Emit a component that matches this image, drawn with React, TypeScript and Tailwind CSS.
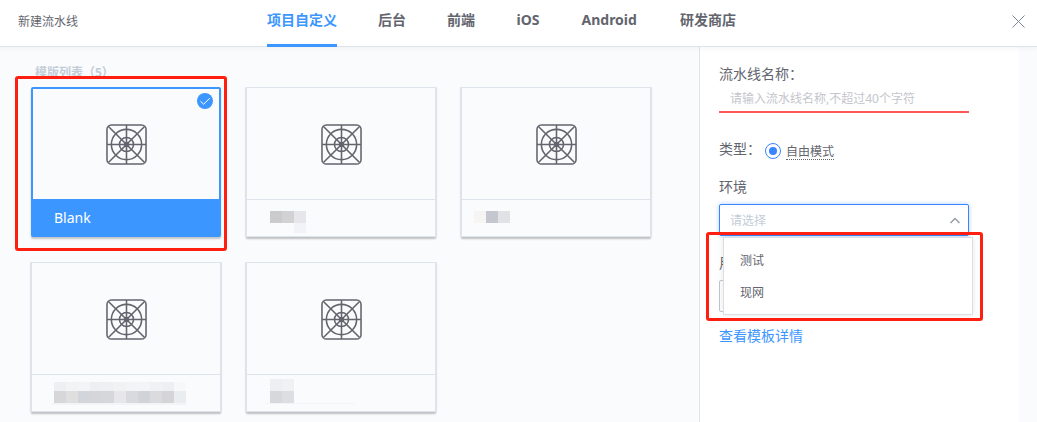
import React from 'react';

const GRID_FONT = "font-['Noto_Sans','Noto_Sans_CJK_SC',sans-serif]";

function TemplateIcon() {
  return (
    <svg width="41" height="41" viewBox="0 0 42 42" fill="none" stroke="#63656e" strokeWidth="1.6">
      <rect x="1" y="1" width="40" height="40" rx="4.5" />
      <circle cx="21" cy="21" r="15.5" />
      <circle cx="21" cy="21" r="7.2" />
      <circle cx="21" cy="21" r="2" fill="#63656e" />
      <path d="M21 1V41M1 21H41M2.5 2.5L39.5 39.5M39.5 2.5L2.5 39.5" />
    </svg>
  );
}

type Block = { x: number; y: number; w: number; h: number; c: string };

const strip = (x: number, y: number, h: number, colors: string[]): Block[] =>
  colors.map((c, i) => ({ x: x + i * 12, y, w: 12, h, c }));

const masks: Block[][] = [
  [...strip(23, 11, 12, ['#cbcbce', '#d2d2d5', '#e7e7eb']), { x: 47, y: 23, w: 12, h: 10, c: '#f2f3f8' }],
  strip(12, 11, 12, ['#f7f5f3', '#c4c7d0', '#e2e2e6']),
  [
    ...strip(22, 7, 9, ['#eeeff2', '#f2f3f5', '#f3f4f5', '#eeeff1', '#eff0f2', '#f1f2f4', '#f3f4f5', '#f3f4f5', '#f0f1f3', '#edeff3', '#f7f8fa']),
    ...strip(22, 16, 12, ['#d7d7d9', '#dfdfe0', '#d2d6db', '#d5d6da', '#d6d7da', '#e7e7e9', '#d9dadf', '#d2d3d8', '#dbdbdf', '#d5d5d7', '#e9edf0']),
    { x: 20, y: 28, w: 135, h: 2, c: '#f3f4f6' },
  ],
  [
    ...strip(23, 4, 12, ['#eeeff2', '#f0f1f2']),
    ...strip(23, 16, 12, ['#d7d8dc', '#dddee2']),
    { x: 18, y: 28, w: 90, h: 1, c: '#f3f4f6' },
  ],
];

function Mask({ blocks }: { blocks: Block[] }) {
  return (
    <svg className="block" width="188" height="36" viewBox="0 0 188 36" shapeRendering="crispEdges">
      {blocks.map((b, i) => (
        <rect key={i} x={b.x} y={b.y} width={b.w} height={b.h} fill={b.c} />
      ))}
    </svg>
  );
}

function TemplateCard({ blocks }: { blocks: Block[] }) {
  return (
    <div className="flex h-[150px] w-[190px] flex-col rounded-[1px] border border-[#dde4eb] bg-[#fafbfd] shadow-[-1px_0_0_#dfe3e8,1px_0_0_#dfe3e8,0_2px_2px_rgba(0,0,0,0.24)]">
      <div className="flex h-[111px] items-center justify-center pt-0.5">
        <TemplateIcon />
      </div>
      <div className="border-t border-[#dde4eb]">
        <Mask blocks={blocks} />
      </div>
    </div>
  );
}

function SelectedCard() {
  return (
    <div className="relative flex h-[150px] w-[190px] flex-col rounded-[2px] border-2 border-[#3c96ff] bg-[#fafbfd] shadow-[0_2px_2px_rgba(0,0,0,0.22)]">
      <div className="flex h-[110px] items-center justify-center">
        <TemplateIcon />
      </div>
      <div className="h-[36px] bg-[#3c96ff] pl-[21px] text-sm leading-[38px] text-white">Blank</div>
      <svg className="absolute top-1 right-1.5" width="16" height="16" viewBox="0 0 16 16" fill="none">
        <circle cx="8" cy="8" r="8" fill="#3c96ff" />
        <path d="M3.5 8.3L6.6 11.2L12.8 5.2" stroke="#fff" strokeWidth="1" />
      </svg>
      <div className="absolute -top-[13px] -left-[18px] h-[175px] w-[212px] rounded-[3px] border-[3px] border-[#ff1f10]" />
    </div>
  );
}

const tabs = [
  { label: '项目自定义', width: 'w-[70px]' },
  { label: '后台', width: 'w-[28px]' },
  { label: '前端', width: 'w-[28.5px]' },
  { label: 'iOS', width: 'w-[24px]' },
  { label: 'Android', width: 'w-[57.5px]' },
  { label: '研发商店', width: 'w-[56px]' },
];

function Header() {
  return (
    <header className="relative z-10 flex h-[47px] shrink-0 border-b border-[#dde4eb] bg-white shadow-[0_2px_5px_rgba(0,0,0,0.04)]">
      <h1 className="w-[267px] pl-[18px] text-xs leading-[43px] font-normal text-[#63656e]">新建流水线</h1>
      <nav className="flex h-[47px] flex-1 gap-[41px] text-sm leading-[40px] font-bold">
        {tabs.map((tab, i) => (
          <span
            key={tab.label}
            className={`${tab.width} whitespace-nowrap ${i === 0 ? 'border-b-[3px] border-[#3c96ff] text-[#3c96ff]' : 'text-[#63656e]'}`}
          >
            {tab.label}
          </span>
        ))}
      </nav>
      <svg className="mt-[15px] mr-3 shrink-0" width="13" height="13" viewBox="0 0 13 13" stroke="#7b8699" strokeWidth="1">
        <path d="M0.5 0.5L12.5 12.5M12.5 0.5L0.5 12.5" />
      </svg>
    </header>
  );
}

function Dropdown() {
  return (
    <>
      <ul className="absolute top-[32px] left-[3px] z-10 flex h-[78px] w-[250px] flex-col border border-[#dcdee5] bg-white pt-[7px] pl-4 text-xs shadow-[0_0_6px_rgba(51,60,72,0.12)]">
        <li className="h-8 leading-8">测试</li>
        <li className="h-8 leading-8">现网</li>
      </ul>
      <div className="absolute top-[27px] -left-[14px] z-20 h-[89px] w-[277px] rounded-[3px] border-[3px] border-[#ff1f10]" />
    </>
  );
}

function SettingsPanel() {
  return (
    <aside className="flex w-[320px] shrink-0 flex-col border-l border-[#dde4eb] bg-white pl-[19px] text-sm text-[#63656e]">
      <div className="mt-[17px] h-5 leading-5">流水线名称：</div>
      <div className="mt-px h-[28px] w-[250px] border-b-2 border-[#ff5656] pl-[11px] text-xs leading-[27px] text-[#c4c6cc]">
        请输入流水线名称,不超过40个字符
      </div>
      <div className="mt-[26px] flex h-5 items-start leading-5">
        <span className="w-[46px] whitespace-nowrap">类型：</span>
        <svg className="mt-1" width="16" height="16" viewBox="0 0 16 16">
          <circle cx="8" cy="8" r="7.5" fill="none" stroke="#3a84ff" />
          <circle cx="8" cy="8" r="4" fill="#3a84ff" />
        </svg>
        <span className="mt-1 ml-[5px] h-[17px] border-b border-dotted border-[#63656e] text-xs leading-[17px]">自由模式</span>
      </div>
      <div className="mt-[18px] h-5 leading-5">环境</div>
      <div className="relative mt-[7px] flex h-8 w-[250px] items-center justify-between rounded-[2px] border border-[#3a84ff] bg-white pr-2 pl-2.5 text-xs shadow-[0_0_4px_rgba(58,132,255,0.4)]">
        <span className="pt-px text-[#c3cdd7]">请选择</span>
        <svg width="10" height="7" viewBox="0 0 10 7" fill="none" stroke="#979ba5" strokeWidth="1.5">
          <path d="M0.5 6L5 1.5L9.5 6" />
        </svg>
        <Dropdown />
      </div>
      <div className="mt-[17px] h-5 w-3.5 leading-5">用</div>
      <div className="mt-[7px] h-8 w-[250px] rounded-[2px] border border-[#c4c6cc]" />
      <a className="mt-[14px] h-5 leading-5 text-[#3c96ff]">查看模板详情</a>
    </aside>
  );
}

export default function App() {
  return (
    <div className={`flex h-[422px] w-[1037px] flex-col overflow-hidden bg-[#fafbfd] ${GRID_FONT}`}>
      <Header />
      <div className="flex min-h-0 flex-1">
        <main className="w-[699px] shrink-0 pt-[15px] pl-[31px]">
          <h2 className="h-[25px] pl-1 text-xs leading-[22px] font-bold text-[#c3cdd7]">模版列表（5）</h2>
          <div className="grid grid-cols-[190px_190px_190px] gap-[25px]">
            <SelectedCard />
            {masks.map((blocks, i) => (
              <TemplateCard key={i} blocks={blocks} />
            ))}
          </div>
        </main>
        <SettingsPanel />
      </div>
    </div>
  );
}
